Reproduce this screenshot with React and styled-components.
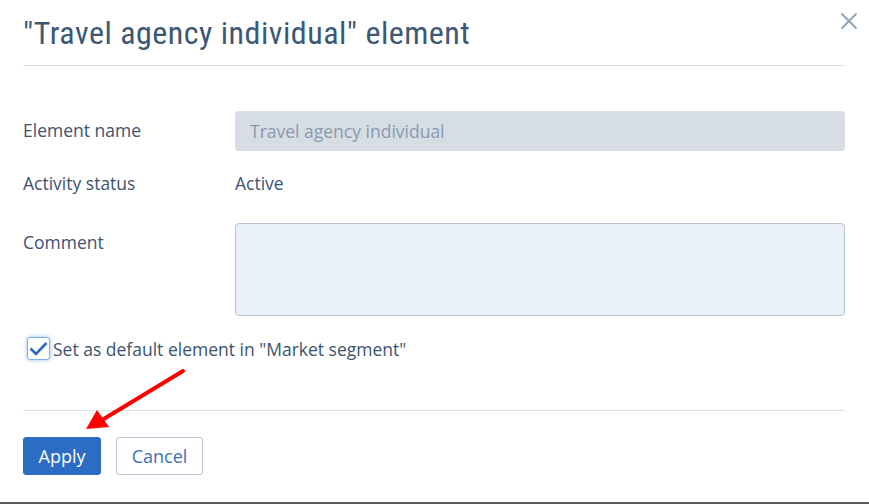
import styled, { createGlobalStyle } from 'styled-components';

const GlobalStyle = createGlobalStyle`
    html, body {
        margin: 0;
        padding: 0;
        background: #ffffff;
    }
    body {
        font-family: "Open Sans", "Noto Sans", sans-serif;
    }
`;

const Dialog = styled.div`
    position: relative;
    box-sizing: border-box;
    width: 869px;
    height: 504px;
    padding: 0 24px 0 23px;
    background: #ffffff;
    border-bottom: 2px solid #5b5b5b;
    display: flex;
    flex-direction: column;
`;

const Header = styled.div`
    height: 65px;
    display: flex;
    align-items: flex-start;
    justify-content: space-between;
    border-bottom: 1px solid #dedfe0;
`;

const Title = styled.h1`
    margin: 12px 0 0 0;
    font-family: "Liberation Sans Narrow", "Roboto Condensed", "Liberation Sans", sans-serif;
    font-weight: 400;
    font-size: 32px;
    letter-spacing: 0.5px;
    line-height: 42px;
    color: #3d5875;
`;

const CloseBtn = styled.button`
    margin: 12px -13px 0 0;
    padding: 0;
    width: 18px;
    height: 18px;
    border: none;
    background: none;
    cursor: pointer;
    display: flex;
    align-items: center;
    justify-content: center;
`;

const Form = styled.div`
    padding-top: 45px;
    display: grid;
    grid-template-columns: 212px 1fr;
    align-items: start;
`;

const Label = styled.div`
    font-size: 17.5px;
    line-height: 22px;
    color: #3d5370;
    padding-top: ${p => p.$top}px;
    height: ${p => p.$h}px;
    box-sizing: border-box;
`;

const Value = styled(Label)``;

const Field = styled.div`
    height: ${p => p.$h}px;
`;

const ReadonlyInput = styled.div`
    box-sizing: border-box;
    height: 40px;
    padding: 0 15px;
    border-radius: 4px;
    background: #d7dde4;
    color: #8a9aae;
    font-size: 17.5px;
    line-height: 40px;
`;

const Comment = styled.textarea`
    box-sizing: border-box;
    display: block;
    width: 100%;
    height: 93px;
    margin: 0;
    border: 1px solid #b9c3d0;
    border-radius: 4px;
    background: #eaf0f8;
    resize: none;
    font-family: inherit;
    font-size: 16px;
`;

const CheckRow = styled.label`
    margin: 21px 0 0 4px;
    display: flex;
    align-items: center;
    gap: 3px;
    font-size: 17.5px;
    line-height: 22px;
    color: #3d5370;
`;

const CheckBox = styled.span`
    box-sizing: border-box;
    width: 23px;
    height: 23px;
    border: 1px solid #7ab2e8;
    border-radius: 3px;
    background: #fff;
    box-shadow: 0 0 4px rgba(80, 150, 230, 0.6);
    display: flex;
    align-items: center;
    justify-content: center;
`;

const Footer = styled.div`
    margin-top: 50px;
    border-top: 1px solid #dedfe0;
    padding-top: 26px;
    display: flex;
    gap: 15px;
`;

const Button = styled.button`
    box-sizing: border-box;
    height: 38px;
    width: ${p => (p.$primary ? 78 : 87)}px;
    padding: 0;
    border-radius: 3px;
    font-family: "Open Sans", "Noto Sans", sans-serif;
    font-size: 18px;
    cursor: pointer;
    border: 1px solid ${p => (p.$primary ? '#2b6cc4' : '#b7c6d8')};
    background: ${p => (p.$primary ? '#2b6cc4' : '#ffffff')};
    color: ${p => (p.$primary ? '#ffffff' : '#3b6fba')};
`;

const Arrow = styled.svg`
    position: absolute;
    left: 80px;
    top: 365px;
    pointer-events: none;
`;

export default function App() {
    return (
        <>
            <GlobalStyle />
            <Dialog>
                <Header>
                    <Title>"Travel agency individual" element</Title>
                    <CloseBtn aria-label="close">
                        <svg width="18" height="18" viewBox="0 0 18 18">
                            <path d="M1.5 1.5 L16.5 16.5 M16.5 1.5 L1.5 16.5" stroke="#8ea6be" strokeWidth="2" />
                        </svg>
                    </CloseBtn>
                </Header>

                <Form>
                    <Label $top={8} $h={54}>Element name</Label>
                    <Field $h={54}>
                        <ReadonlyInput>Travel agency individual</ReadonlyInput>
                    </Field>

                    <Label $top={7} $h={58}>Activity status</Label>
                    <Value $top={7} $h={58}>Active</Value>

                    <Label $top={8}>Comment</Label>
                    <Comment />
                </Form>

                <CheckRow>
                    <CheckBox>
                        <svg width="19" height="15" viewBox="0 0 19 15">
                            <path d="M1.5 7.5 L7 13 L17.5 2" fill="none" stroke="#2a6bbd" strokeWidth="2.6" />
                        </svg>
                    </CheckBox>
                    Set as default element in "Market segment"
                </CheckRow>

                <Footer>
                    <Button $primary>Apply</Button>
                    <Button>Cancel</Button>
                </Footer>

                <Arrow width="110" height="70" viewBox="0 0 110 70">
                    <line x1="103" y1="6" x2="22" y2="55" stroke="#f00" strokeWidth="4" strokeLinecap="round" />
                    <polygon points="6,64 17,45 29,62" fill="#f00" />
                </Arrow>
            </Dialog>
        </>
    );
}
